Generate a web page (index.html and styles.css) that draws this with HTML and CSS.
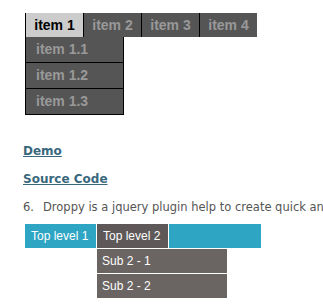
FILE: index.html
```html
<!DOCTYPE html>
<html lang="en">
<head>
    <meta charset="UTF-8">
    <title>Dropdown menus</title>
    <link rel="stylesheet" href="styles.css">
</head>
<body>
    <div class="page">
        <!-- Меню 1 -->
        <ul class="nav">
            <li class="nav-item active">item 1</li>
            <li class="nav-item">item 2</li>
            <li class="nav-item">item 3</li>
            <li class="nav-item">item 4</li>
        </ul>
        <ul class="nav-drop">
            <li>item 1.1</li>
            <li>item 1.2</li>
            <li>item 1.3</li>
        </ul>

        <div class="post">
            <p class="link"><a href="#">Demo</a></p>
            <p class="link"><a href="#">Source Code</a></p>
            <p class="desc"><span class="num">6.</span>Droppy is a jquery plugin help to create quick and easy dropdown menus</p>
        </div>

        <!-- Меню 2 -->
        <ul class="droppy">
            <li class="droppy-item">Top level 1</li>
            <li class="droppy-item open">Top level 2
                <ul class="droppy-sub">
                    <li>Sub 2 - 1</li>
                    <li>Sub 2 - 2</li>
                </ul>
            </li>
        </ul>
    </div>
</body>
</html>
```

FILE: styles.css
```css
* {
    box-sizing: border-box;
    margin: 0;
    padding: 0;
}

body {
    background: #fff;
    font-family: "Liberation Sans", Arial, sans-serif;
}

.page {
    min-height: 304px;
    padding-top: 13px;
}

ul {
    list-style: none;
}

.nav {
    display: flex;
    margin-left: 25px;
    height: 24px;
}

.nav-item {
    width: 58px;
    border-left: 1px solid #000;
    background: #555;
    color: #999;
    font-size: 14px;
    font-weight: bold;
    line-height: 24px;
    text-align: center;
}

.nav-item.active {
    background: #ccc;
    color: #000;
}

.nav-drop {
    width: 99px;
    margin-left: 25px;
    border-left: 1px solid #000;
    border-right: 1px solid #000;
    background: #555;
}

.nav-drop li {
    height: 26px;
    padding-left: 10px;
    border-bottom: 1px solid #000;
    color: #999;
    font-size: 14px;
    font-weight: bold;
    line-height: 25px;
}

.post {
    padding: 28px 0 0 23px;
    font-family: "DejaVu Sans", Verdana, sans-serif;
    overflow: hidden;
}

.link {
    font-size: 12px;
    font-weight: bold;
    line-height: 16px;
    margin-bottom: 12px;
}

.link a {
    color: #39687c;
}

.desc {
    color: #555;
    font-size: 11.5px;
    line-height: 16px;
    white-space: nowrap;
}

.num {
    display: inline-block;
    width: 20px;
}

.droppy {
    display: flex;
    width: 236px;
    height: 24px;
    margin: 9px 0 0 25px;
    background: #2fa5c4;
}

.droppy-item {
    position: relative;
    width: 72px;
    padding-left: 6px;
    border-right: 1px solid #fff;
    color: #fff;
    font-size: 12px;
    line-height: 24px;
}

.droppy-item.open {
    background: #5e5958;
}

.droppy-sub {
    position: absolute;
    top: 25px;
    left: 0;
    z-index: 2;
    width: 130px;
    background: #6a6462;
}

.droppy-sub li {
    height: 25px;
    padding-left: 5px;
    border-bottom: 1px solid #fff;
    font-size: 12px;
    line-height: 24px;
}
```
